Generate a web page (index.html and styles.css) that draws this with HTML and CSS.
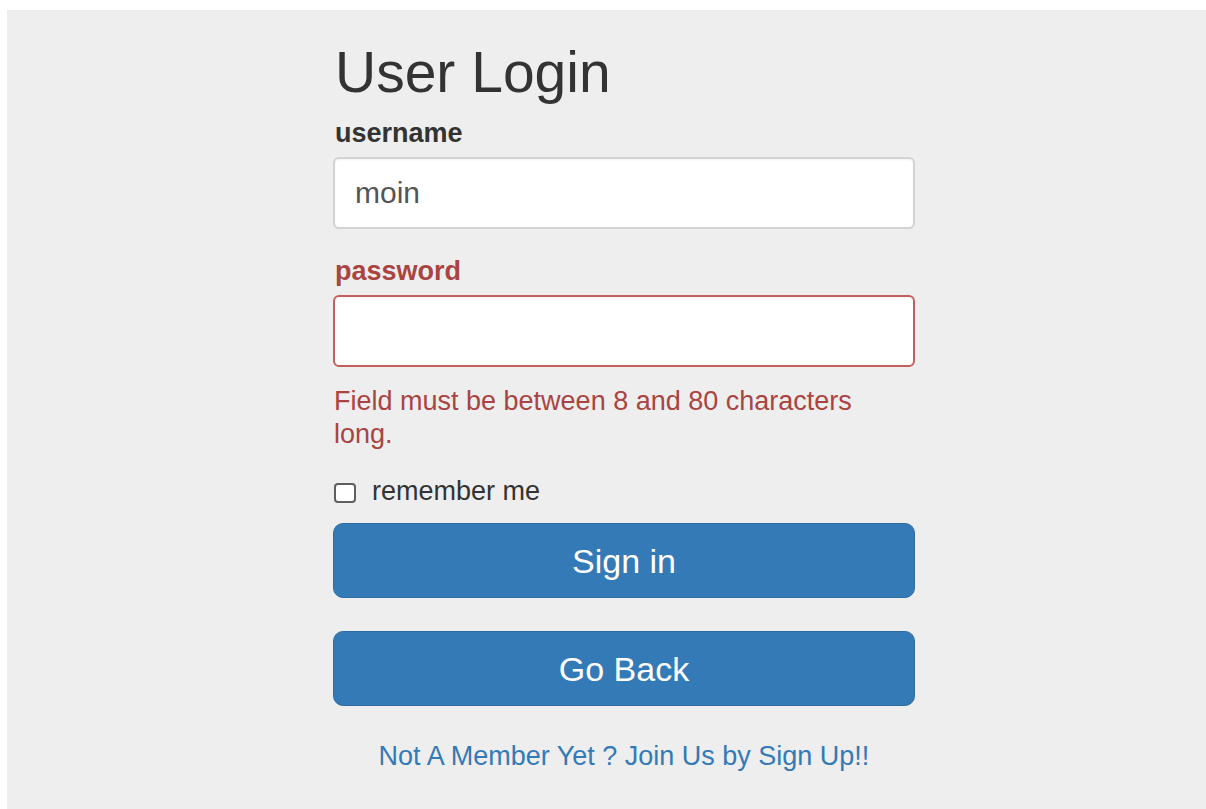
FILE: index.html
```html
<!DOCTYPE html>
<html lang="en">
<head>
<meta charset="utf-8">
<title>User Login</title>
<link rel="stylesheet" href="styles.css">
</head>
<body>
<main class="page">
  <form class="login" action="#" method="post">
    <h1 class="login-title">User Login</h1>

    <div class="field">
      <label class="field-label" for="username">username</label>
      <input class="field-input" id="username" name="username" type="text" value="moin">
    </div>

    <div class="field field-error">
      <label class="field-label" for="password">password</label>
      <input class="field-input" id="password" name="password" type="password">
      <p class="field-help">Field must be between 8 and 80 characters long.</p>
    </div>

    <label class="remember">
      <input class="remember-box" type="checkbox" name="remember">
      <span>remember me</span>
    </label>

    <button class="btn btn-primary btn-signin" type="submit">Sign in</button>
    <button class="btn btn-primary btn-back" type="button">Go Back</button>

    <p class="signup"><a class="signup-link" href="#">Not A Member Yet ? Join Us by Sign Up!!</a></p>
  </form>
</main>
</body>
</html>
```

FILE: styles.css
```css
html, body {
  background: #ffffff;
}

body {
  margin: 10px 0 0 7px;
  font-family: "Liberation Sans", Arial, Helvetica, sans-serif;
  font-size: 27px;
  line-height: 32px;
  color: #333333;
}

.page {
  background: #eeeeee;
  min-height: calc(100vh - 10px);
  padding-top: 31px;
  box-sizing: border-box;
}

.login {
  width: 582px;
  margin-left: 326px;
  display: flex;
  flex-direction: column;
}

.login-title {
  margin: 0 0 11px 2px;
  font-size: 57px;
  line-height: 63px;
  font-weight: 400;
  color: #333333;
}

.field {
  display: flex;
  flex-direction: column;
  margin-bottom: 24px;
}

.field-label {
  margin: 0 0 8px 2px;
  padding-top: 2px;
  font-weight: 700;
  line-height: 32px;
  color: #333333;
}

.field-input {
  box-sizing: border-box;
  width: 100%;
  height: 72px;
  margin: 0;
  padding: 0 20px;
  font-family: inherit;
  font-size: 30px;
  color: #555555;
  background: #ffffff;
  border: 2px solid #d3d3d3;
  border-radius: 6px;
  box-shadow: inset 0 1px 2px rgba(0, 0, 0, 0.05);
  outline: none;
}

.field-error {
  margin-bottom: 0;
}

.field-error .field-label {
  color: #a94442;
}

.field-error .field-input {
  border-color: #c3605e;
}

.field-help {
  margin: 18px 0 0 1px;
  line-height: 33px;
  color: #a94442;
}

.remember {
  display: flex;
  align-items: flex-start;
  margin-top: 24px;
  line-height: 32px;
  color: #333333;
}

.remember-box {
  appearance: none;
  -webkit-appearance: none;
  width: 22px;
  height: 20px;
  margin: 8px 16px 0 1px;
  box-sizing: border-box;
  border: 2px solid #5f5f5f;
  border-radius: 4px;
  background: #ffffff;
}

.btn {
  display: block;
  box-sizing: border-box;
  width: 100%;
  height: 75px;
  margin: 0;
  padding: 0;
  font-family: inherit;
  font-size: 34px;
  line-height: 1;
  color: #ffffff;
  border-radius: 10px;
  cursor: pointer;
}

.btn-primary {
  background: #337ab7;
  border: 1px solid #2e6da4;
}

.btn-signin {
  margin-top: 16px;
}

.btn-back {
  margin-top: 33px;
}

.signup {
  margin: 34px 0 0;
  text-align: center;
  line-height: 32px;
}

.signup-link {
  color: #337ab7;
  text-decoration: none;
}
```
